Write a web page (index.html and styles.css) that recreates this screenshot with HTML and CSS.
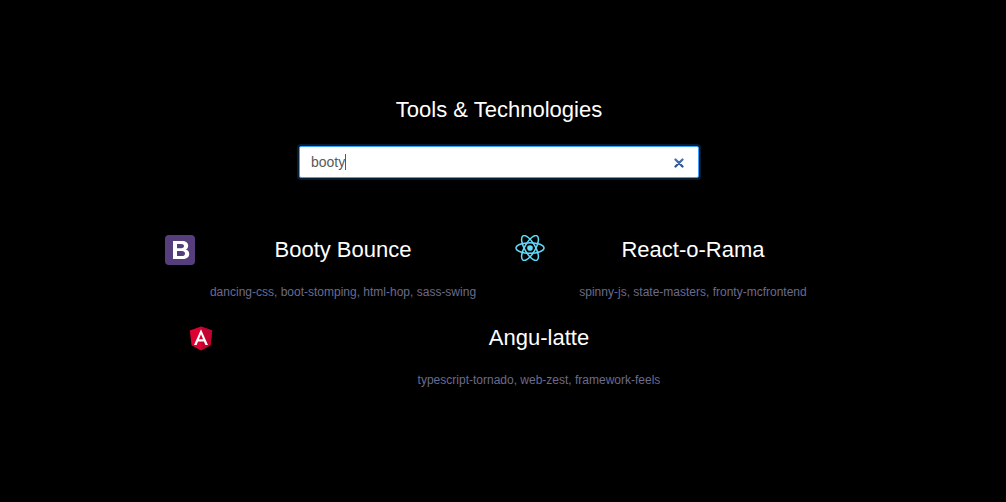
FILE: index.html
```html
<!DOCTYPE html>
<html lang="en">
<head>
<meta charset="utf-8">
<meta name="viewport" content="width=device-width, initial-scale=1">
<title>Tools &amp; Technologies</title>
<link rel="stylesheet" href="styles.css">
</head>
<body>
<main class="page">
  <header class="header">
    <h1 class="heading">Tools &amp; Technologies</h1>
    <form class="search" role="search">
      <input class="search-input" type="text" value="booty" aria-label="Search tools" autocomplete="off">
      <span class="search-caret"></span>
      <button class="search-clear" type="reset" aria-label="Clear search">
        <svg width="10" height="10" viewBox="0 0 10 10">
          <defs><linearGradient id="clear" x1="0" y1="0" x2="0" y2="10" gradientUnits="userSpaceOnUse"><stop offset="0" stop-color="#4a78bd"/><stop offset="1" stop-color="#2a4a8c"/></linearGradient></defs>
          <path d="M1.500 1.500l7 7M8.500 1.500l-7 7" stroke="url(#clear)" stroke-width="2.300" stroke-linecap="round"/>
        </svg>
      </button>
    </form>
  </header>
  <section class="cards">
    <article class="card">
      <svg class="logo" width="30" height="30" viewBox="0 0 30 30">
        <rect width="30" height="30" rx="4" fill="#563d7c"/>
        <path fill="#fff" fill-rule="evenodd" d="M8 6h9c3.900 0 6.200 1.700 6.200 4.700 0 1.900-1 3.200-2.500 3.800 2.100.5 3.500 2.100 3.500 4.400 0 3.300-2.700 5.100-6.700 5.100H8zM12 8.900v4.300h4.300c1.700 0 2.700-.8 2.700-2.200s-1-2.100-2.700-2.100zM12 16v5.100h4.900c2 0 3.100-.8 3.100-2.500S18.900 16 16.900 16z"/>
      </svg>
      <div class="card-text">
        <h2 class="heading">Booty Bounce</h2>
        <p class="tags">dancing-css, boot-stomping, html-hop, sass-swing</p>
      </div>
    </article>
    <article class="card">
      <svg class="logo" width="30" height="26" viewBox="-11.500 -10.200 23 20.400">
        <circle r="2.200" fill="#61dafb"/>
        <g fill="none" stroke="#61dafb" stroke-width="1.200">
          <ellipse rx="11" ry="4.200"/>
          <ellipse rx="11" ry="4.200" transform="rotate(60)"/>
          <ellipse rx="11" ry="4.200" transform="rotate(120)"/>
        </g>
      </svg>
      <div class="card-text">
        <h2 class="heading">React-o-Rama</h2>
        <p class="tags">spinny-js, state-masters, fronty-mcfrontend</p>
      </div>
    </article>
    <article class="card card-wide">
      <svg class="logo" width="30" height="30" viewBox="0 0 250 250">
        <path fill="#dd0031" d="M125 30L31.900 63.200l14.200 123.100L125 230l78.900-43.700 14.200-123.100z"/>
        <path fill="#c3002f" d="M125 30v200l78.900-43.700 14.200-123.100z"/>
        <path fill="#fff" d="M125 52.100L66.800 182.600h21.700l11.700-29.200h49.400l11.700 29.200H183zm17 83.300h-34l17-40.900z"/>
      </svg>
      <div class="card-text">
        <h2 class="heading">Angu-latte</h2>
        <p class="tags">typescript-tornado, web-zest, framework-feels</p>
      </div>
    </article>
  </section>
</main>
</body>
</html>
```

FILE: styles.css
```css
* {
  box-sizing: border-box;
}

body {
  margin: 0;
  background: #000;
  color: #fff;
  font-family: "Liberation Sans", Arial, sans-serif;
}

.page {
  max-width: 724px;
  margin: 0 auto;
  padding: 95px 24px;
}

.header {
  display: flex;
  flex-direction: column;
  align-items: center;
  gap: 21px;
  padding-right: 8px;
}

.heading {
  margin: 0;
  font-size: 22px;
  font-weight: 400;
  line-height: 30px;
}

.search {
  position: relative;
  display: flex;
  align-items: center;
  width: 100%;
  max-width: 400px;
  height: 32px;
  border: 1px solid #40a0ff;
  border-radius: 2px;
  background: #fff;
  box-shadow: 0 0 0 2px rgba(24, 144, 255, 0.2);
}

.search-input {
  flex: 1;
  min-width: 0;
  padding: 0 0 0 11px;
  border: 0;
  outline: 0;
  background: none;
  color: #595959;
  font: 14px "Liberation Sans", Arial, sans-serif;
}

.search-caret {
  position: absolute;
  top: 7px;
  left: 45px;
  width: 1px;
  height: 16px;
  background: #595959;
}

.search-clear {
  display: flex;
  margin-right: 9px;
  padding: 6px 5px 4px;
  border: 0;
  background: none;
}

.cards {
  display: grid;
  grid-template-columns: repeat(auto-fit, minmax(280px, 1fr));
  gap: 23px 24px;
  margin-top: 57px;
}

.card {
  display: flex;
  align-items: flex-start;
}

.card-wide {
  grid-column: 1 / -1;
}

.card-wide .logo {
  margin: 0 21px;
}

.logo {
  flex: none;
}

.card-text {
  flex: 1;
  text-align: center;
}

.tags {
  margin: 19px 0 0;
  color: #6b6b8d;
  font-size: 12px;
  line-height: 16px;
}
```
